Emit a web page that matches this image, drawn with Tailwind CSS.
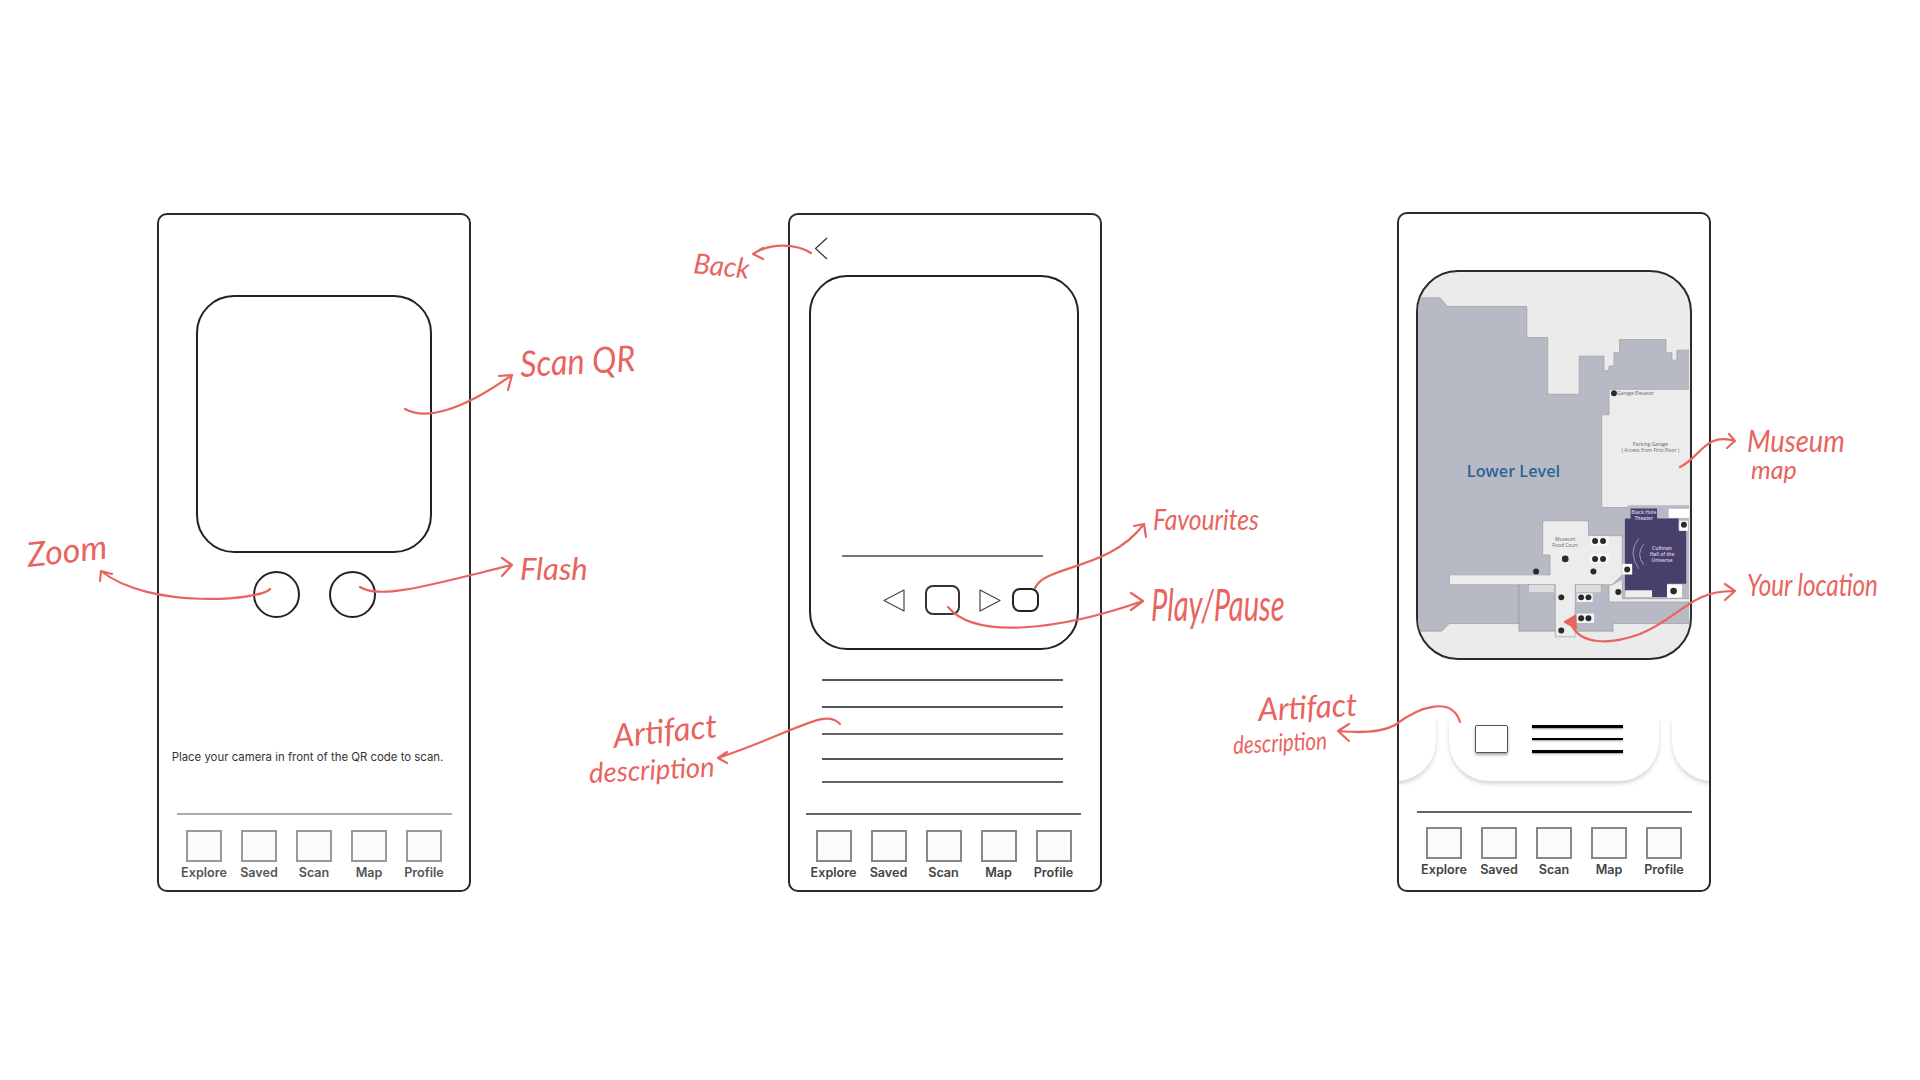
<!DOCTYPE html>
<html lang="en">
  <head>
    <meta charset="UTF-8" />
    <title>Museum app wireframes</title>
    <script src="https://cdn.jsdelivr.net/npm/@tailwindcss/browser@4"></script>
  </head>
  <body class="bg-white font-['Inter',sans-serif]">
    <div class="relative w-[1920px] h-[1080px] overflow-hidden bg-white">

      <!-- Scan screen -->
      <section class="absolute left-[157px] top-[213px] w-[314px] h-[679px] border-[2.5px] border-[#2b2b2b] rounded-[10px] flex flex-col items-center">
        <div class="mt-[80px] w-[236px] h-[258px] border-[2.5px] border-[#222] rounded-[38px]"></div>
        <div class="mt-[18px] flex gap-[29px]">
          <div class="w-[47px] h-[47px] rounded-full border-[2.5px] border-[#222]"></div>
          <div class="w-[47px] h-[47px] rounded-full border-[2.5px] border-[#222]"></div>
        </div>
        <p class="mt-[131px] -ml-[13px] text-[11.4px] leading-[16px] text-[#333] whitespace-nowrap">Place your camera in front of the QR code to scan.</p>
        <nav class="mt-auto w-[275px] h-[77px] border-t-2 border-[#aaa] grid grid-cols-5 text-[12.6px] leading-[16px] font-semibold text-[#555]">
          <div class="flex flex-col items-center pt-[15px]"><div class="w-[36px] h-[32px] bg-[#fdfafa] border-2 border-[#999]"></div><span class="mt-[3px]">Explore</span></div>
          <div class="flex flex-col items-center pt-[15px]"><div class="w-[36px] h-[32px] bg-[#fdfafa] border-2 border-[#999]"></div><span class="mt-[3px]">Saved</span></div>
          <div class="flex flex-col items-center pt-[15px]"><div class="w-[36px] h-[32px] bg-[#fdfafa] border-2 border-[#999]"></div><span class="mt-[3px]">Scan</span></div>
          <div class="flex flex-col items-center pt-[15px]"><div class="w-[36px] h-[32px] bg-[#fdfafa] border-2 border-[#999]"></div><span class="mt-[3px]">Map</span></div>
          <div class="flex flex-col items-center pt-[15px]"><div class="w-[36px] h-[32px] bg-[#fdfafa] border-2 border-[#999]"></div><span class="mt-[3px]">Profile</span></div>
        </nav>
      </section>

      <!-- Artifact screen -->
      <section class="absolute left-[788px] top-[213px] w-[314px] h-[679px] border-[2.5px] border-[#2b2b2b] rounded-[10px] flex flex-col">
        <svg class="ml-[24px] mt-[22px] shrink-0" width="14" height="23" viewBox="0 0 14 23" fill="none" stroke="#333" stroke-width="1.2"><path d="M13 1 L1.5 11.5 L13 22" /></svg>
        <div class="ml-[19px] mt-[15px] w-[270px] h-[375px] border-[2.5px] border-[#222] rounded-[38px] flex flex-col">
          <div class="ml-[31px] mt-[278px] w-[201px] border-t-2 border-[#777]"></div>
          <div class="ml-[72px] mt-[28px] flex items-center">
            <svg width="22" height="23" viewBox="0 0 22 23" fill="none" stroke="#444" stroke-width="1.2" stroke-linejoin="round"><path d="M21 1 L1 11.5 L21 22 Z" /></svg>
            <div class="ml-[20px] w-[35px] h-[30px] border-[2.5px] border-[#333] rounded-[8px]"></div>
            <svg class="ml-[19px]" width="22" height="23" viewBox="0 0 22 23" fill="none" stroke="#444" stroke-width="1.2" stroke-linejoin="round"><path d="M1 1 L21 11.5 L1 22 Z" /></svg>
            <div class="ml-[11px] w-[27px] h-[24px] border-[2.5px] border-[#222] rounded-[8px]"></div>
          </div>
        </div>
        <div class="ml-[32px] mt-[29px] w-[241px] flex flex-col">
          <div class="h-[2px] bg-[#555]"></div>
          <div class="mt-[25px] h-[2px] bg-[#555]"></div>
          <div class="mt-[25px] h-[2px] bg-[#666]"></div>
          <div class="mt-[23px] h-[2px] bg-[#555]"></div>
          <div class="mt-[21px] h-[2px] bg-[#666]"></div>
        </div>
        <nav class="mt-auto ml-[16px] w-[275px] h-[77px] border-t-2 border-[#666] grid grid-cols-5 text-[12.6px] leading-[16px] font-semibold text-[#444]">
          <div class="flex flex-col items-center pt-[15px]"><div class="w-[36px] h-[32px] bg-[#fdfafa] border-2 border-[#888]"></div><span class="mt-[3px]">Explore</span></div>
          <div class="flex flex-col items-center pt-[15px]"><div class="w-[36px] h-[32px] bg-[#fdfafa] border-2 border-[#888]"></div><span class="mt-[3px]">Saved</span></div>
          <div class="flex flex-col items-center pt-[15px]"><div class="w-[36px] h-[32px] bg-[#fdfafa] border-2 border-[#888]"></div><span class="mt-[3px]">Scan</span></div>
          <div class="flex flex-col items-center pt-[15px]"><div class="w-[36px] h-[32px] bg-[#fdfafa] border-2 border-[#888]"></div><span class="mt-[3px]">Map</span></div>
          <div class="flex flex-col items-center pt-[15px]"><div class="w-[36px] h-[32px] bg-[#fdfafa] border-2 border-[#888]"></div><span class="mt-[3px]">Profile</span></div>
        </nav>
      </section>

      <!-- Map screen -->
      <section class="absolute left-[1397px] top-[212px] w-[314px] h-[680px] border-[2.5px] border-[#2b2b2b] rounded-[10px] flex flex-col items-center overflow-hidden">
        <div class="mt-[56px] w-[276px] h-[390px] border-[2.5px] border-[#2b2b2b] rounded-[42px] overflow-hidden bg-[#ebebeb] shrink-0">
          <svg class="block" width="271" height="385" viewBox="24 34 817 1162" font-family="'Open Sans', sans-serif">
            <path fill="#b7bac4" stroke="#999" stroke-width="2" d="M22 112 L90 112 L112 138 L352 138 L352 232 L415 232 L415 403 L510 403 L510 288 L585 288 L585 332 L600 332 L600 318 L615 318 L615 278 L632 278 L632 238 L772 238 L772 278 L790 278 L790 300 L805 300 L805 270 L850 270 L850 1095 L612 1095 L612 1118 L328 1118 L328 1095 L118 1095 L95 1118 L22 1118 Z" />
            <!-- parking + food court + corridors -->
            <path fill="#ececec" stroke="#999" stroke-width="2" d="M600 388 L850 388 L850 745 L578 745 L578 465 L600 465 Z" />
            <path fill="#ececec" stroke="#999" stroke-width="2" d="M400 785 L538 785 L538 830 L640 830 L640 948 L610 978 L498 978 L498 1135 L438 1135 L438 978 L118 978 L118 948 L422 948 L422 888 L400 888 Z" />
            <path fill="#ececec" stroke="#999" stroke-width="2" d="M610 978 L640 960 L640 1020 L850 1020 L850 1030 L600 1030 L600 978 Z" />
            <path fill="none" stroke="#888" stroke-width="2" d="M328 978 L328 1095" />
            <rect x="780" y="748" width="70" height="28" fill="#fff" />
            <rect x="655" y="738" width="195" height="10" fill="#b7bac4" />
            <rect x="358" y="978" width="78" height="24" fill="#ddd" stroke="#999" />
            <rect x="500" y="978" width="76" height="24" fill="#ddd" stroke="#999" />
            <rect x="503" y="1004" width="48" height="26" fill="#f4f4f4" />
            <rect x="503" y="1065" width="52" height="28" fill="#f4f4f4" />
            <rect x="543" y="832" width="56" height="28" fill="#f8f8f8" />
            <rect x="543" y="885" width="56" height="30" fill="#f8f8f8" />
            <!-- theater -->
            <path fill="#483f6b" d="M648 778 L665 778 L665 748 L745 748 L745 778 L810 778 L810 815 L833 815 L833 975 L775 975 L775 1015 L730 1015 L730 995 L648 995 Z" />
            <rect x="650" y="995" width="80" height="20" fill="#eee" />
            <rect x="775" y="977" width="45" height="40" fill="#fff" />
            <rect x="812" y="785" width="26" height="30" fill="#fff" />
            <rect x="640" y="915" width="30" height="32" fill="#fff" />
            <g fill="none" stroke="#c9c6d6" stroke-width="2"><path d="M690 838 Q655 880 690 930" /><path d="M705 855 Q680 885 705 918" /></g>
            <g fill="#2a2a2a" stroke="#1e1e1e" stroke-width="0">
              <circle cx="468" cy="900" r="10" /><circle cx="615" cy="400" r="9" /><circle cx="380" cy="938" r="9" /><circle cx="553" cy="938" r="9" />
              <circle cx="655" cy="932" r="9" /><circle cx="456" cy="1016" r="9" /><circle cx="516" cy="1016" r="9" /><circle cx="538" cy="1016" r="9" />
              <circle cx="516" cy="1079" r="9" /><circle cx="538" cy="1079" r="9" /><circle cx="456" cy="1116" r="9" /><circle cx="558" cy="846" r="9" />
              <circle cx="582" cy="846" r="9" /><circle cx="558" cy="900" r="9" /><circle cx="582" cy="900" r="9" /><circle cx="628" cy="1000" r="9" />
              <circle cx="795" cy="997" r="10" /><circle cx="826" cy="797" r="9" />
            </g>
            <text x="171" y="654" font-size="49" font-weight="600" fill="#2a6496">Lower Level</text>
            <g font-size="15" fill="#666" text-anchor="middle">
              <text x="680" y="405">Garage Elevator</text>
              <text x="725" y="560">Parking Garage</text>
              <text x="725" y="578">( Access from First Floor )</text>
              <text x="468" y="846">Museum</text>
              <text x="468" y="864">Food Court</text>
            </g>
            <g font-size="15" font-weight="600" fill="#d9d7e4" text-anchor="middle">
              <text x="705" y="764">Black Hole</text>
              <text x="705" y="784">Theater</text>
              <text x="760" y="872">Cullman</text>
              <text x="760" y="891">Hall of the</text>
              <text x="760" y="910">Universe</text>
            </g>
          </svg>
        </div>
        <!-- artifact carousel -->
        <div class="mt-[58px] w-full pb-[10px] overflow-hidden flex justify-center gap-[13px] shrink-0">
          <div class="w-[210px] h-[63px] shrink-0 bg-white rounded-b-[40px] shadow-[0_3px_4px_rgba(0,0,0,0.16)]"></div>
          <div class="w-[210px] h-[63px] shrink-0 bg-white rounded-b-[40px] shadow-[0_3px_4px_rgba(0,0,0,0.16)] flex items-start pt-[7px] pl-[26px]">
            <div class="w-[33px] h-[28px] bg-white border border-[#555] rounded-[2px] shadow-[0_2px_3px_rgba(0,0,0,0.35)]"></div>
            <div class="ml-[24px] w-[91px] flex flex-col gap-[10px]">
              <div class="h-[2.5px] bg-black shadow-[0_1px_2px_rgba(0,0,0,0.4)]"></div>
              <div class="h-[2.5px] bg-black shadow-[0_1px_2px_rgba(0,0,0,0.4)]"></div>
              <div class="h-[2.5px] bg-black shadow-[0_1px_2px_rgba(0,0,0,0.4)]"></div>
            </div>
          </div>
          <div class="w-[210px] h-[63px] shrink-0 bg-white rounded-b-[40px] shadow-[0_3px_4px_rgba(0,0,0,0.16)]"></div>
        </div>
        <nav class="mt-auto mb-[2px] w-[275px] h-[77px] border-t-2 border-[#666] grid grid-cols-5 text-[12.6px] leading-[16px] font-semibold text-[#444]">
          <div class="flex flex-col items-center pt-[14px]"><div class="w-[36px] h-[32px] bg-[#fdfafa] border-2 border-[#888]"></div><span class="mt-[3px]">Explore</span></div>
          <div class="flex flex-col items-center pt-[14px]"><div class="w-[36px] h-[32px] bg-[#fdfafa] border-2 border-[#888]"></div><span class="mt-[3px]">Saved</span></div>
          <div class="flex flex-col items-center pt-[14px]"><div class="w-[36px] h-[32px] bg-[#fdfafa] border-2 border-[#888]"></div><span class="mt-[3px]">Scan</span></div>
          <div class="flex flex-col items-center pt-[14px]"><div class="w-[36px] h-[32px] bg-[#fdfafa] border-2 border-[#888]"></div><span class="mt-[3px]">Map</span></div>
          <div class="flex flex-col items-center pt-[14px]"><div class="w-[36px] h-[32px] bg-[#fdfafa] border-2 border-[#888]"></div><span class="mt-[3px]">Profile</span></div>
        </nav>
      </section>

      <!-- Red annotation arrows -->
      <svg class="absolute inset-0 pointer-events-none" width="1920" height="1080" viewBox="0 0 1920 1080" fill="none" stroke="#e8645f" stroke-width="2.2" stroke-linecap="round" stroke-linejoin="round">
        <path d="M405 409 C425 420 460 412 512 375 M499 376 L512 375 L508 390" />
        <path d="M270 589 C262 600 150 610 101 571 M100 581 L101 571 L112 574" />
        <path d="M360 587 C380 600 430 585 512 565 M502 558 L512 565 L502 576" />
        <path d="M811 253 C795 243 770 243 753 254 M763 248 L753 254 L763 259" />
        <path d="M1035 588 C1045 565 1110 570 1144 524 M1134 526 L1144 524 L1146 537" />
        <path d="M948 607 C975 640 1060 630 1143 601 M1131 593 L1143 601 L1131 610" />
        <path d="M840 724 C825 708 800 730 718 758 M727 752 L718 758 L727 763" />
        <path d="M1460 722 C1452 696 1420 706 1395 725 C1380 733 1360 733 1338 731 M1349 724 L1338 731 L1349 741" />
        <path d="M1680 467 C1700 458 1705 432 1735 441 M1729 434 L1735 441 L1727 448" />
        <path d="M1735 591 C1690 590 1680 618 1640 634 C1610 645 1580 645 1571 624 M1725 584 L1735 591 L1725 600" />
        <path d="M1565 622 L1575 616 L1576 628 Z" fill="#e8645f" />
      </svg>

      <!-- Handwritten labels -->
      <div class="absolute inset-0 pointer-events-none font-['Lato',sans-serif] font-normal italic text-[#e8645f] whitespace-nowrap">
        <span class="absolute left-[520px] top-[341px] text-[36px] leading-[44px] origin-left -rotate-3 scale-x-[0.9]">Scan QR</span>
        <span class="absolute left-[27px] top-[536px] text-[34px] leading-[36px] origin-left -rotate-6">Zoom</span>
        <span class="absolute left-[520px] top-[550px] text-[31px] leading-[36px] origin-left">Flash</span>
        <span class="absolute left-[694px] top-[245px] text-[28px] leading-[34px] origin-left rotate-6 scale-x-[0.98]">Back</span>
        <span class="absolute left-[1153px] top-[502px] text-[28px] leading-[34px] origin-left scale-x-[0.88]">Favourites</span>
        <span class="absolute left-[1151px] top-[578px] text-[44px] leading-[52px] origin-left scale-x-[0.66]">Play/Pause</span>
        <span class="absolute left-[613px] top-[716px] text-[33px] leading-[38px] origin-left -rotate-6">Artifact</span>
        <span class="absolute left-[589px] top-[755px] text-[28px] leading-[34px] origin-left -rotate-3 scale-x-[0.98]">description</span>
        <span class="absolute left-[1258px] top-[690px] text-[32px] leading-[38px] origin-left -rotate-3 scale-x-[0.98]">Artifact</span>
        <span class="absolute left-[1233px] top-[728px] text-[25px] leading-[32px] origin-left -rotate-3 scale-x-[0.82]">description</span>
        <span class="absolute left-[1747px] top-[422px] text-[31px] leading-[36px] origin-left scale-x-[0.88]">Museum</span>
        <span class="absolute left-[1751px] top-[454px] text-[25px] leading-[30px] origin-left">map</span>
        <span class="absolute left-[1747px] top-[565px] text-[31px] leading-[38px] origin-left scale-x-[0.78]">Your location</span>
      </div>
    </div>
  </body>
</html>
